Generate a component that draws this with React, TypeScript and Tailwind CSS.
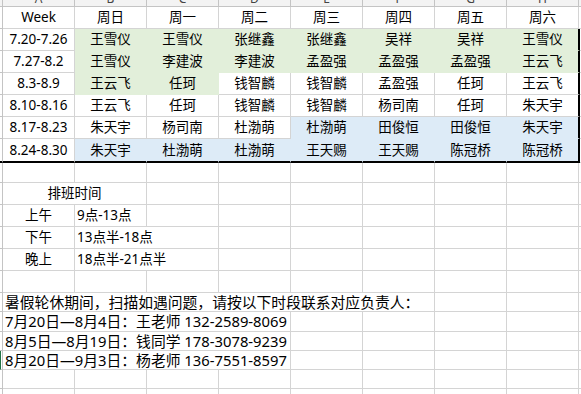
import React from 'react';
import clsx from 'clsx';

type Fill = 'g' | 'b' | undefined;

const spanW: Record<number, string> = {
  1: 'w-[72px]',
  2: 'w-[144px]',
  4: 'w-[288px]',
  6: 'w-[432px]',
};

const Cell: React.FC<{
  children?: React.ReactNode;
  span?: number;
  fill?: Fill;
  left?: boolean;
  className?: string;
}> = ({ children, span = 1, fill, left, className }) => (
  <div
    className={clsx(
      'shrink-0 flex items-center whitespace-nowrap border-r border-b',
      spanW[span],
      fill === 'g' && 'bg-[#e2efda] border-[#e2efda]',
      fill === 'b' && 'bg-[#ddebf7] border-[#ddebf7]',
      !fill && 'bg-white border-[#d4d4d4]',
      left ? 'pl-[2px]' : 'justify-center',
      className
    )}
  >
    {children}
  </div>
);

const RowHead: React.FC<{ className?: string }> = ({ className }) => (
  <div className={clsx('w-[3px] shrink-0 border-r border-b border-[#c4c4c4] bg-white', className)} />
);

const Filler: React.FC = () => <div className="flex-1 border-b border-[#d4d4d4]" />;

const Empty: React.FC<{ n: number }> = ({ n }) => (
  <>
    {Array.from({ length: n }).map((_, i) => (
      <Cell key={i} />
    ))}
  </>
);

const weeks: { w: string; names: string[]; fills: Fill[] }[] = [
  {
    w: '7.20-7.26',
    names: ['王雪仪', '王雪仪', '张继鑫', '张继鑫', '吴祥', '吴祥', '王雪仪'],
    fills: ['g', 'g', 'g', 'g', 'g', 'g', 'g'],
  },
  {
    w: '7.27-8.2',
    names: ['王雪仪', '李建波', '李建波', '孟盈强', '孟盈强', '孟盈强', '王云飞'],
    fills: ['g', 'g', 'g', 'g', 'g', 'g', 'g'],
  },
  {
    w: '8.3-8.9',
    names: ['王云飞', '任珂', '钱智麟', '钱智麟', '孟盈强', '任珂', '王云飞'],
    fills: ['g', 'g', undefined, undefined, undefined, undefined, undefined],
  },
  {
    w: '8.10-8.16',
    names: ['王云飞', '任珂', '钱智麟', '钱智麟', '杨司南', '任珂', '朱天宇'],
    fills: [undefined, undefined, undefined, undefined, undefined, undefined, undefined],
  },
  {
    w: '8.17-8.23',
    names: ['朱天宇', '杨司南', '杜渤萌', '杜渤萌', '田俊恒', '田俊恒', '朱天宇'],
    fills: [undefined, undefined, undefined, 'b', 'b', 'b', 'b'],
  },
  {
    w: '8.24-8.30',
    names: ['朱天宇', '杜渤萌', '杜渤萌', '王天赐', '王天赐', '陈冠桥', '陈冠桥'],
    fills: ['b', 'b', 'b', 'b', 'b', 'b', 'b'],
  },
];

const days = ['周日', '周一', '周二', '周三', '周四', '周五', '周六'];
const letters = ['A', 'B', 'C', 'D', 'E', 'F', 'G', 'H'];

const contacts = [
  '7月20日—8月4日：王老师 132-2589-8069',
  '8月5日—8月19日：钱同学 178-3078-9239',
  '8月20日—9月3日：杨老师 136-7551-8597',
];

const App: React.FC = () => {
  return (
    <div className="w-[581px] h-[394px] overflow-hidden bg-white text-black font-['Noto_Sans','Noto_Sans_CJK_SC',sans-serif]">
      {/* column letters, mostly scrolled off */}
      <div className="flex h-[7px]">
        <div className="w-[3px] shrink-0 border-r border-b border-[#c4c4c4] bg-[#f3f3f3]" />
        {letters.map((l) => (
          <div
            key={l}
            className="w-[72px] shrink-0 flex items-end justify-center overflow-hidden border-r border-b border-[#c4c4c4] bg-[#f3f3f3] text-[12px] text-[#444]"
          >
            <span className="leading-[12px] mb-[1px]">{l}</span>
          </div>
        ))}
        <div className="flex-1 border-b border-[#c4c4c4] bg-[#f3f3f3]" />
      </div>

      <div className="text-[13.5px] leading-[21px]">
        <div className="flex h-[22px]">
          <RowHead />
          <Cell>Week</Cell>
          {days.map((d) => (
            <Cell key={d}>{d}</Cell>
          ))}
          <Filler />
        </div>

        {weeks.map((row, r) => {
          const last = r === weeks.length - 1;
          return (
            <div key={row.w} className={clsx('flex', last ? 'h-[24px]' : 'h-[22px]')}>
              <RowHead className={clsx(last && 'border-b-2 border-b-black')} />
              <Cell className={clsx(last && 'border-b-2 border-b-black')}>{row.w}</Cell>
              {row.names.map((n, i) => (
                <Cell
                  key={i}
                  fill={row.fills[i]}
                  className={clsx(
                    last && 'border-b-2 border-b-black',
                    i === 6 && 'w-[73px] border-r-2 border-r-black'
                  )}
                >
                  {n}
                </Cell>
              ))}
              <Filler />
            </div>
          );
        })}

        <div className="flex h-[20px]">
          <RowHead />
          <Empty n={8} />
          <Filler />
        </div>

        {/* 排班时间 */}
        <div className="flex h-[22px]">
          <RowHead />
          <Cell span={2}>排班时间</Cell>
          <Empty n={6} />
          <Filler />
        </div>
        <div className="flex h-[22px]">
          <RowHead />
          <Cell>上午</Cell>
          <Cell left>9点-13点</Cell>
          <Empty n={6} />
          <Filler />
        </div>
        <div className="flex h-[22px]">
          <RowHead />
          <Cell>下午</Cell>
          <Cell span={2} left>
            13点半-18点
          </Cell>
          <Empty n={5} />
          <Filler />
        </div>
        <div className="flex h-[22px]">
          <RowHead />
          <Cell>晚上</Cell>
          <Cell span={2} left>
            18点半-21点半
          </Cell>
          <Empty n={5} />
          <Filler />
        </div>
        <div className="flex h-[22px]">
          <RowHead />
          <Empty n={8} />
          <Filler />
        </div>
      </div>

      <div className="text-[14.8px] leading-[19px]">
        <div className="flex h-[19px]">
          <RowHead />
          <Cell span={6} left>
            暑假轮休期间，扫描如遇问题，请按以下时段联系对应负责人：
          </Cell>
          <Empty n={2} />
          <Filler />
        </div>
        {contacts.map((c, i) => (
          <div key={c} className={clsx('flex', i === 0 ? 'h-[20px]' : 'h-[19px]')}>
            <RowHead className={clsx(i === 2 && 'border-l border-l-[#217346]')} />
            <Cell span={4} left>
              {c}
            </Cell>
            <Empty n={4} />
            <Filler />
          </div>
        ))}
        <div className="flex h-[19px]">
          <RowHead />
          <Empty n={8} />
          <Filler />
        </div>
        <div className="flex h-[19px]">
          <RowHead />
          <Empty n={8} />
          <Filler />
        </div>
      </div>
    </div>
  );
};

export default App;
